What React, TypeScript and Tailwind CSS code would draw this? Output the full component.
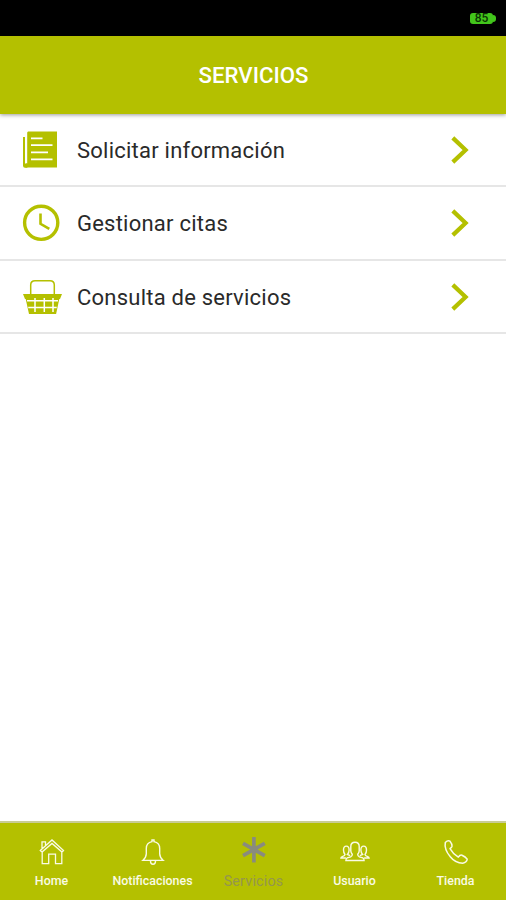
import type { ReactNode } from 'react';

const DocumentIcon = () => (
  <svg className="h-10 w-10" viewBox="0 0 40 40" fill="#b4c000">
    <path d="M1 7h2v26.500H5.400v4.200H3a2 2 0 0 1-2-2z" />
    <path d="M6 1.500h29v36H3.500l.5-4h1.200V2.500z" />
    <path d="M9 8.300h11.500M9 15.200h21.500M9 22.300h17M9 29.300h21.500" stroke="#fff" strokeWidth="1.700" />
  </svg>
);

const ClockIcon = () => (
  <svg className="h-10 w-10" viewBox="0 0 40 40" fill="none" stroke="#b4c000" strokeWidth="3.400">
    <circle cx="19.200" cy="19.800" r="16.600" />
    <path d="M18.500 10.500v10.300l8.800 5" strokeWidth="2.600" />
  </svg>
);

const BasketIcon = () => (
  <svg className="h-10 w-10" viewBox="0 0 40 40" fill="none">
    <path d="M8.700 17V8q0-4.300 4.300-4.300h15q4.300 0 4.300 4.300v9" stroke="#b4c000" strokeWidth="1.500" />
    <path d="M1 17h39l-2 5h-.7l-3.200 15H7L3.700 22H3z" fill="#b4c000" />
    <path d="M5 23.800h31M6.200 30.500h28.500M13 21v14M22.300 21v14M31 21v14" stroke="#fff" strokeWidth="1.500" />
  </svg>
);

const ChevronIcon = () => (
  <svg className="h-7 w-4.5 shrink-0" viewBox="0 0 18 28" fill="none" stroke="#b4c000" strokeWidth="4.200">
    <path d="M1.800 1.900 14.600 14 1.800 26.100" />
  </svg>
);

const HomeIcon = () => (
  <svg className="h-7 w-7" viewBox="0 0 28 28" fill="none" stroke="#fafbe5" strokeWidth="1.300">
    <path d="M2.300 13.500 14 3l11.500 10.500-1.500 1.600L14 6.400l-10 8.700zM4 11.900V4.800h3.500v3.900M4.200 15.300v11.400h6.500v-9.600h6.800v9.600h6.300V15.300" />
  </svg>
);

const BellIcon = () => (
  <svg className="h-7 w-7" viewBox="0 0 28 28" fill="none" stroke="#fafbe5" strokeWidth="1.400">
    <path d="M3.800 23.400q3.500-3.300 3.500-6.700v-5.200q0-5.800 5.700-6.900V3h2v1.600q5.700 1.100 5.700 6.900v5.200q0 3.400 3.500 6.700zM11.500 24q0 3.200 2.500 3.200t2.500-3.200" />
  </svg>
);

const AsteriskIcon = () => (
  <svg className="h-7 w-7" viewBox="0 0 28 28" fill="none" stroke="#898b7e" strokeWidth="3.700">
    <path d="M13.900 -.5v26M3 6.300l21.800 12.400M3 18.700 24.800 6.300" />
  </svg>
);

const PeopleIcon = () => (
  <svg className="h-7 w-[30px]" viewBox="0 0 30 28" fill="none" stroke="#fafbe5" strokeWidth="1.400">
    <path d="M12.300 17.300q-1.300-1.300-1.500-3.300V9.400q0-4.200 4.200-4.200t4.200 4.200V14q-.2 2-1.500 3.300 0 2 1.600 2.500l3.500 1.100q1.300.5 1.300 2.600H5.900q0-2.100 1.300-2.600l3.500-1.100q1.600-.5 1.600-2.500z" />
    <path d="M10.200 18.600 7.400 17.500q1.700-1.800 1.700-4.500 0-3.900-2.800-3.900T3.500 13q0 2.700 1.500 4.500-.2 1.300-2.200 1.900Q.9 20 .9 21h5M19.800 18.600l2.800-1.100Q20.900 15.700 20.900 13q0-3.900 2.800-3.900t2.800 3.900q0 2.700-1.500 4.500.2 1.300 2.200 1.900 1.900.6 1.900 1.600h-5" />
  </svg>
);

const PhoneIcon = () => (
  <svg className="h-7 w-7" viewBox="0 0 28 28" fill="none" stroke="#fafbe5" strokeWidth="1.500" strokeLinejoin="round">
    <path d="M3.300 5.500Q5.800 3 8 4.200 10.300 7 10 9.200 9.700 10.400 8 11.600 11.200 17.200 16.300 20.200 18 17.700 20 18.200 23.500 19.700 25.200 22.200 24.800 25.300 20.700 26.300 13.300 26.200 8.300 19.800 2 12.300 3.300 5.500Z" />
  </svg>
);

const services: { label: string; icon: ReactNode }[] = [
  { label: 'Solicitar información', icon: <DocumentIcon /> },
  { label: 'Gestionar citas', icon: <ClockIcon /> },
  { label: 'Consulta de servicios', icon: <BasketIcon /> },
];

const tabs: { label: string; icon: ReactNode; className: string }[] = [
  { label: 'Home', icon: <HomeIcon />, className: 'text-[12.400px] font-medium text-[#fafbe5]' },
  { label: 'Notificaciones', icon: <BellIcon />, className: 'text-[12.400px] font-medium text-[#fafbe5]' },
  { label: 'Servicios', icon: <AsteriskIcon />, className: 'text-[14.300px] tracking-[0.200px] text-[#94964d]' },
  { label: 'Usuario', icon: <PeopleIcon />, className: 'text-[12.400px] font-medium text-[#fafbe5]' },
  { label: 'Tienda', icon: <PhoneIcon />, className: 'text-[12.400px] font-medium text-[#fafbe5]' },
];

export default function App() {
  return (
    <div className="flex h-[900px] w-[506px] flex-col overflow-hidden bg-white font-['Roboto',sans-serif]">
      <div className="flex h-9 shrink-0 items-center justify-end bg-black pr-[10px]">
        <div className="flex items-center">
          <div className="flex h-[11px] w-[23px] items-center justify-center rounded-[3px] bg-[#42c51b] text-[12px] leading-none font-medium text-[#0b3203]">85</div>
          <div className="h-[7px] w-[3px] rounded-r-sm bg-[#42c51b]" />
        </div>
      </div>
      <header className="z-10 flex h-[78px] shrink-0 items-center justify-center bg-[#b4c000] pt-[2px] pl-px shadow-[0_1px_4px_rgba(0,0,0,0.4)]">
        <h1 className="text-[22.200px] font-medium text-white">SERVICIOS</h1>
      </header>
      <main className="flex-1">
        {services.map((service) => (
          <div key={service.label} className="flex h-[73.300px] items-center border-b-2 border-[#e6e6e6] pt-px pr-[37px] pl-[22px]">
            {service.icon}
            <span className="ml-[15px] flex-1 pt-px text-[22px] tracking-[0.230px] text-[#2a2a2a]">{service.label}</span>
            <ChevronIcon />
          </div>
        ))}
      </main>
      <nav className="grid h-[79px] shrink-0 grid-cols-5 border-t-2 border-[#c9cc96] bg-[#b4c000] pl-px">
        {tabs.map((tab) => (
          <div key={tab.label} className="flex min-w-0 flex-col items-center pt-[14px]">
            {tab.icon}
            <span className={`mt-[6px] leading-5 ${tab.className}`}>{tab.label}</span>
          </div>
        ))}
      </nav>
    </div>
  );
}
